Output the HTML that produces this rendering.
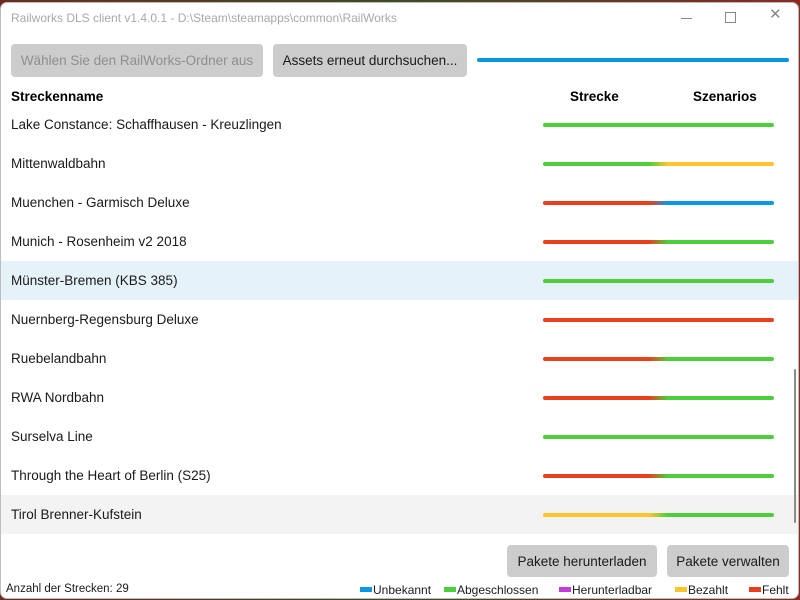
<!DOCTYPE html>
<html><head><meta charset="utf-8"><style>
*{margin:0;padding:0;box-sizing:border-box}
body{width:800px;height:600px;overflow:hidden;background:linear-gradient(90deg,#6b2a22,#3d4a2a,#8a2a20);font-family:"Liberation Sans",sans-serif;position:relative}
.win{position:absolute;left:0;top:2px;width:799px;height:597px;background:#fff;border:1px solid #bdbdbd;border-radius:7px;overflow:hidden}
.title{position:absolute;left:10px;top:8px;font-size:12px;color:#a8a8a8}
.btn{position:absolute;background:#cccccc;border-radius:4px;font-size:13.5px;color:#1a1a1a;display:flex;align-items:center;justify-content:center;white-space:nowrap}
.hdr{position:absolute;top:86px;font-size:13.5px;font-weight:bold;color:#000}
.row{position:absolute;left:0;width:797px;height:39px}
.row span{position:absolute;left:10px;top:11px;font-size:13.5px;color:#1a1a1a}
.bar{position:absolute;left:542px;top:17px;width:231px;height:4px;border-radius:2px}
.leg{position:absolute;top:580px;font-size:12px;color:#1a1a1a}
.leg i{display:inline-block;width:12px;height:5px;margin-right:1px;vertical-align:2px}
</style></head><body>
<div class="win">
<div class="title">Railworks DLS client v1.4.0.1 - D:\Steam\steamapps\common\RailWorks</div>
<div style="position:absolute;left:680px;top:15px;width:11px;height:1px;background:#888"></div>
<div style="position:absolute;left:724px;top:9px;width:11px;height:11px;border:1px solid #888"></div>
<div style="position:absolute;left:768px;top:2px;font-size:15px;color:#888">✕</div>
<div class="btn" style="left:10px;top:41px;width:252px;height:33px;color:#8e8e8e">Wählen Sie den RailWorks-Ordner aus</div>
<div class="btn" style="left:272px;top:41px;width:194px;height:33px">Assets erneut durchsuchen...</div>
<div style="position:absolute;left:476px;top:55px;width:312px;height:4px;border-radius:2px;background:#0596e4"></div>
<div class="hdr" style="left:10px">Streckenname</div>
<div class="hdr" style="left:569px">Strecke</div>
<div class="hdr" style="left:692px">Szenarios</div>

<div class="row" style="top:103px"><span>Lake Constance: Schaffhausen - Kreuzlingen</span><div class="bar" style="background:#4ccf3a"></div></div>
<div class="row" style="top:142px"><span>Mittenwaldbahn</span><div class="bar" style="background:linear-gradient(90deg,#4ccf3a 46%,#fcc52c 54%)"></div></div>
<div class="row" style="top:181px"><span>Muenchen - Garmisch Deluxe</span><div class="bar" style="background:linear-gradient(90deg,#e8401c 46%,#0a98e4 54%)"></div></div>
<div class="row" style="top:220px"><span>Munich - Rosenheim v2 2018</span><div class="bar" style="background:linear-gradient(90deg,#e8401c 46%,#4ccf3a 54%)"></div></div>
<div class="row" style="top:258px;background:#e5f2fa"><span style="top:12px">Münster-Bremen (KBS 385)</span><div class="bar" style="top:18px;background:#4ccf3a"></div></div>
<div class="row" style="top:298px"><span>Nuernberg-Regensburg Deluxe</span><div class="bar" style="background:#e8401c"></div></div>
<div class="row" style="top:337px"><span>Ruebelandbahn</span><div class="bar" style="background:linear-gradient(90deg,#e8401c 46%,#4ccf3a 54%)"></div></div>
<div class="row" style="top:376px"><span>RWA Nordbahn</span><div class="bar" style="background:linear-gradient(90deg,#e8401c 46%,#4ccf3a 54%)"></div></div>
<div class="row" style="top:415px"><span>Surselva Line</span><div class="bar" style="background:#4ccf3a"></div></div>
<div class="row" style="top:454px"><span>Through the Heart of Berlin (S25)</span><div class="bar" style="background:linear-gradient(90deg,#e8401c 46%,#4ccf3a 54%)"></div></div>
<div class="row" style="top:492px;background:#f3f3f3"><span style="top:12px">Tirol Brenner-Kufstein</span><div class="bar" style="top:18px;background:linear-gradient(90deg,#fcc52c 46%,#4ccf3a 54%)"></div></div>

<div style="position:absolute;left:793px;top:366px;width:2px;height:154px;background:#8a8a8a;border-radius:1px"></div>

<div class="btn" style="left:506px;top:542px;width:150px;height:32px">Pakete herunterladen</div>
<div class="btn" style="left:666px;top:542px;width:122px;height:32px">Pakete verwalten</div>
<div style="position:absolute;left:5px;top:580px;font-size:11.5px;color:#1a1a1a">Anzahl der Strecken: 29</div>
<div class="leg" style="left:359px"><i style="background:#0a98e4"></i>Unbekannt</div>
<div class="leg" style="left:443px"><i style="background:#4ccf3a"></i>Abgeschlossen</div>
<div class="leg" style="left:558px"><i style="background:#c13ed8"></i>Herunterladbar</div>
<div class="leg" style="left:674px"><i style="background:#fcc52c"></i>Bezahlt</div>
<div class="leg" style="left:748px"><i style="background:#e8401c"></i>Fehlt</div>
</div>
</body></html>
